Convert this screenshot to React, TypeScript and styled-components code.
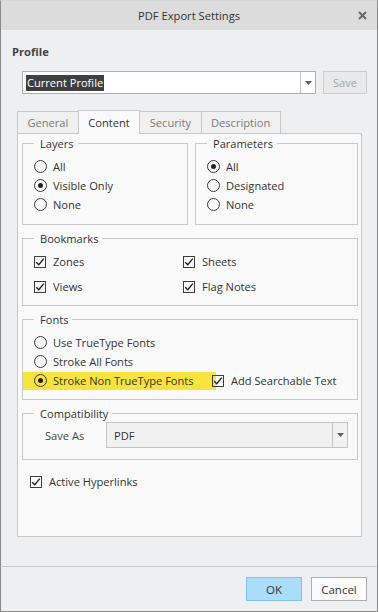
import React from "react";
import styled, { createGlobalStyle } from "styled-components";

const Global = createGlobalStyle`
  html, body { margin: 0; padding: 0; background: #ffffff; }
  body {
    font-family: "Open Sans", "Noto Sans", sans-serif;
    font-size: 11.1px;
    color: #333333;
  }
  *, *::before, *::after { box-sizing: border-box; }
`;

const Window = styled.div`
  width: 378px;
  height: 612px;
  display: flex;
  flex-direction: column;
  background: #eeeff1;
  border: 1px solid #8a8a8a;
  border-top-color: #d6d6d6;
`;

const TitleBar = styled.div`
  flex: none;
  height: 29px;
  display: grid;
  grid-template-columns: 1fr auto 1fr;
  align-items: center;
  background: #dcdcdc;
  font-size: 11.2px;
  color: #333333;
`;

const Title = styled.div`
  grid-column: 2;
  line-height: 16px;
`;

const CloseButton = styled.button`
  grid-column: 3;
  justify-self: end;
  margin-right: 10px;
  width: 9px;
  height: 9px;
  padding: 0;
  border: 0;
  background: none;
  display: flex;
  cursor: pointer;
`;

const Body = styled.div`
  flex: 1;
  min-height: 0;
  display: flex;
  flex-direction: column;
  padding: 13px 10px 29px 11px;
`;

const SectionLabel = styled.div`
  font-weight: 700;
  font-size: 11.2px;
  line-height: 18px;
  color: #444444;
`;

const ProfileRow = styled.div`
  display: flex;
  margin: 10px 0 0 10px;
  gap: 7px;
  height: 23px;
`;

const Combo = styled.div<{ $muted?: boolean; $height: number }>`
  flex: 1;
  height: ${(p) => p.$height}px;
  display: flex;
  align-items: stretch;
  background: ${(p) => (p.$muted ? "#f1f1f1" : "#ffffff")};
  border: 1px solid ${(p) => (p.$muted ? "#c4c4c4" : "#adadad")};
`;

const ComboValue = styled.div<{ $pad: number }>`
  flex: 1;
  display: flex;
  align-items: center;
  padding-left: ${(p) => p.$pad}px;
`;

const SelectedText = styled.span`
  background: #3f3f3f;
  color: #ffffff;
  line-height: 16px;
  padding: 0 1px 0 1px;
`;

const ComboArrow = styled.div`
  flex: none;
  width: 15px;
  border-left: 1px solid #c4c4c4;
  display: flex;
  align-items: center;
  justify-content: center;
`;

const SaveButton = styled.button`
  flex: none;
  width: 44px;
  height: 23px;
  padding: 0;
  font: inherit;
  color: #a6a6a6;
  background: #e9e9e9;
  border: 1px solid #cccccc;
`;

const TabArea = styled.div`
  flex: 1;
  min-height: 0;
  display: flex;
  flex-direction: column;
  margin: 16px 5px 0 5px;
`;

const TabStrip = styled.div`
  flex: none;
  height: 23px;
  display: flex;
  align-items: flex-end;
`;

const Tab = styled.div<{ $active?: boolean }>`
  position: relative;
  z-index: ${(p) => (p.$active ? 1 : 0)};
  height: ${(p) => (p.$active ? 24 : 22)}px;
  margin-bottom: ${(p) => (p.$active ? -1 : 0)}px;
  margin-right: -1px;
  padding: 0 9.5px;
  display: flex;
  align-items: center;
  border: 1px solid #c8c8c8;
  border-bottom: 0;
  background: ${(p) => (p.$active ? "#fafafa" : "#f0f0f0")};
  color: ${(p) => (p.$active ? "#333333" : "#7a7a7a")};
  line-height: 16px;
`;

const Panel = styled.div`
  flex: 1;
  display: flex;
  flex-direction: column;
  background: #fafafa;
  border: 1px solid #c8c8c8;
  padding: 1px 3px 0 4px;
`;

const GroupRow = styled.div`
  display: flex;
  gap: 7px;
`;

const Group = styled.fieldset<{ $width?: number; $fill?: boolean; $top?: number }>`
  margin: ${(p) => p.$top ?? 0}px 0 0 0;
  padding: 0;
  min-width: 0;
  border: 1px solid #c8c8c8;
  flex: ${(p) => (p.$fill ? "1" : "none")};
  ${(p) => (p.$width ? `width: ${p.$width}px;` : "")}
`;

const Legend = styled.legend`
  margin-left: 11px;
  padding: 0 4px 0 6px;
  height: 17px;
  line-height: 17px;
  color: #333333;
`;

const OptionList = styled.div<{ $bottom: number }>`
  display: flex;
  flex-direction: column;
  padding: 5px 0 ${(p) => p.$bottom}px 11px;
`;

const OptionGrid = styled.div`
  display: grid;
  grid-template-columns: 149px 1fr;
  row-gap: 6px;
  padding: 5px 0 9px 11px;
`;

const Option = styled.label<{ $gap: number }>`
  height: 19px;
  display: flex;
  align-items: center;
  gap: ${(p) => p.$gap}px;
  line-height: 16px;
  color: #333333;
  white-space: nowrap;
`;

const HighlightRow = styled.div`
  height: 19px;
  display: flex;
  align-items: center;
`;

const MarkedOption = styled(Option)`
  height: 18px;
  width: 193px;
  margin-left: -11px;
  padding-left: 11px;
  background: #f8e43c;
`;

const SideOption = styled(Option)`
  margin-left: -4px;
`;

const RadioMark = styled.span<{ $on?: boolean }>`
  flex: none;
  width: 13px;
  height: 13px;
  border-radius: 50%;
  border: 1px solid #3c3c3c;
  display: flex;
  align-items: center;
  justify-content: center;
  &::after {
    content: "";
    width: 5px;
    height: 5px;
    border-radius: 50%;
    background: ${(p) => (p.$on ? "#222222" : "transparent")};
  }
`;

const CheckMark = styled.span`
  flex: none;
  width: 12px;
  height: 12px;
  border: 1px solid #3c3c3c;
  display: flex;
  align-items: center;
  justify-content: center;
`;

const CompatRow = styled.div`
  display: flex;
  align-items: center;
  padding: 0 9px 11px 22px;
`;

const FieldLabel = styled.span`
  flex: none;
  width: 61px;
  color: #444444;
`;

const HyperlinkRow = styled.div`
  margin: 12px 0 0 8px;
`;

const Footer = styled.div`
  flex: none;
  height: 45px;
  margin-left: 1px;
  border-top: 1px solid #c6c6c6;
  padding: 10px 10px 10px 0;
  display: flex;
  justify-content: flex-end;
  gap: 9px;
`;

const DialogButton = styled.button<{ $primary?: boolean }>`
  width: 56px;
  height: 24px;
  padding: 0;
  font: inherit;
  font-size: 11.5px;
  color: #333333;
  background: ${(p) => (p.$primary ? "#abdcfc" : "#fbfbfb")};
  border: 1px solid ${(p) => (p.$primary ? "#7cc2f3" : "#adadad")};
`;

const Arrow = () => (
  <svg width="7" height="4" viewBox="0 0 7 4">
    <path d="M0 0 H7 L3.5 4 Z" fill="#5f5f5f" />
  </svg>
);

const Tick = () => (
  <svg width="10" height="10" viewBox="0 0 10 10">
    <path d="M1.2 5.2 L3.8 7.8 L8.8 1.6" fill="none" stroke="#222222" strokeWidth="1.4" />
  </svg>
);

const Radio = ({ label, on }: { label: string; on?: boolean }) => (
  <Option $gap={6}>
    <RadioMark $on={on} />
    {label}
  </Option>
);

const Check = ({ label }: { label: string }) => (
  <Option $gap={7}>
    <CheckMark>
      <Tick />
    </CheckMark>
    {label}
  </Option>
);

export default function App() {
  return (
    <>
      <Global />
      <Window>
        <TitleBar>
          <Title>PDF Export Settings</Title>
          <CloseButton aria-label="Close">
            <svg width="9" height="9" viewBox="0 0 9 9">
              <path d="M1 1 L8 8 M8 1 L1 8" stroke="#6a6a6a" strokeWidth="2.1" />
            </svg>
          </CloseButton>
        </TitleBar>
        <Body>
          <SectionLabel>Profile</SectionLabel>
          <ProfileRow>
            <Combo $height={23}>
              <ComboValue $pad={3}>
                <SelectedText>Current Profile</SelectedText>
              </ComboValue>
              <ComboArrow>
                <Arrow />
              </ComboArrow>
            </Combo>
            <SaveButton disabled>Save</SaveButton>
          </ProfileRow>
          <TabArea>
            <TabStrip>
              <Tab>General</Tab>
              <Tab $active>Content</Tab>
              <Tab>Security</Tab>
              <Tab>Description</Tab>
            </TabStrip>
            <Panel>
              <GroupRow>
                <Group $width={166}>
                  <Legend>Layers</Legend>
                  <OptionList $bottom={10}>
                    <Radio label="All" />
                    <Radio label="Visible Only" on />
                    <Radio label="None" />
                  </OptionList>
                </Group>
                <Group $fill>
                  <Legend>Parameters</Legend>
                  <OptionList $bottom={10}>
                    <Radio label="All" on />
                    <Radio label="Designated" />
                    <Radio label="None" />
                  </OptionList>
                </Group>
              </GroupRow>
              <Group $top={5}>
                <Legend>Bookmarks</Legend>
                <OptionGrid>
                  <Check label="Zones" />
                  <Check label="Sheets" />
                  <Check label="Views" />
                  <Check label="Flag Notes" />
                </OptionGrid>
              </Group>
              <Group $top={5}>
                <Legend>Fonts</Legend>
                <OptionList $bottom={9}>
                  <Radio label="Use TrueType Fonts" />
                  <Radio label="Stroke All Fonts" />
                  <HighlightRow>
                    <MarkedOption $gap={6}>
                      <RadioMark $on />
                      Stroke Non TrueType Fonts
                    </MarkedOption>
                    <SideOption $gap={7}>
                      <CheckMark>
                        <Tick />
                      </CheckMark>
                      Add Searchable Text
                    </SideOption>
                  </HighlightRow>
                </OptionList>
              </Group>
              <Group $top={5}>
                <Legend>Compatibility</Legend>
                <CompatRow>
                  <FieldLabel>Save As</FieldLabel>
                  <Combo $muted $height={26}>
                    <ComboValue $pad={7}>PDF</ComboValue>
                    <ComboArrow>
                      <Arrow />
                    </ComboArrow>
                  </Combo>
                </CompatRow>
              </Group>
              <HyperlinkRow>
                <Check label="Active Hyperlinks" />
              </HyperlinkRow>
            </Panel>
          </TabArea>
        </Body>
        <Footer>
          <DialogButton $primary>OK</DialogButton>
          <DialogButton>Cancel</DialogButton>
        </Footer>
      </Window>
    </>
  );
}
